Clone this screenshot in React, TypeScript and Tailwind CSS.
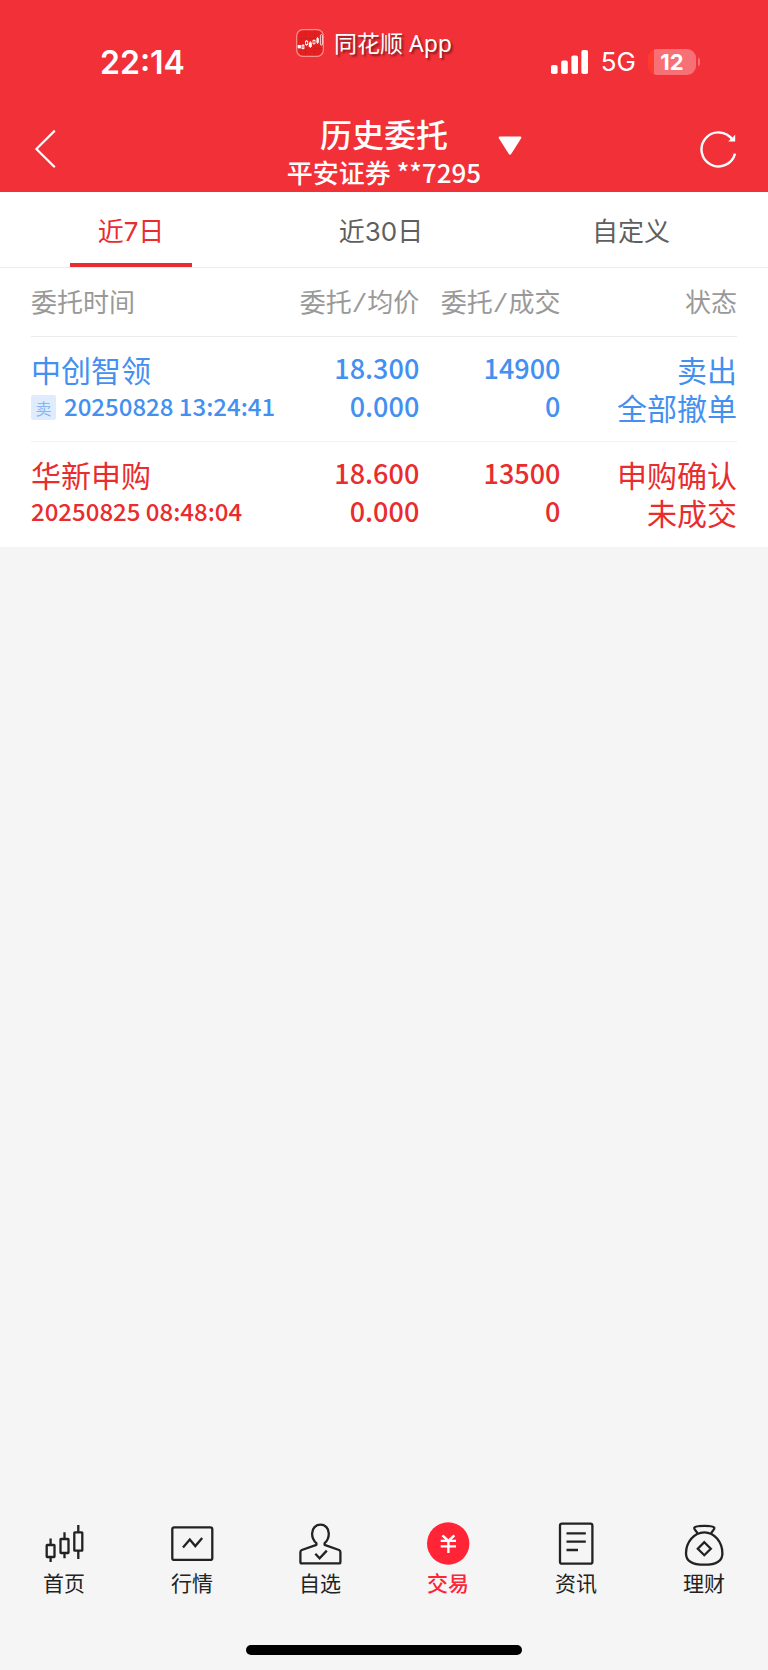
import type { ReactNode } from "react";

type Order = {
  name: string;
  time: string;
  sell?: boolean;
  price: string;
  avgPrice: string;
  amount: string;
  filled: string;
  action: string;
  state: string;
  tone: string;
};

const orders: Order[] = [
  {
    name: "中创智领",
    time: "20250828 13:24:41",
    sell: true,
    price: "18.300",
    avgPrice: "0.000",
    amount: "14900",
    filled: "0",
    action: "卖出",
    state: "全部撤单",
    tone: "text-[#4390f0]",
  },
  {
    name: "华新申购",
    time: "20250825 08:48:04",
    price: "18.600",
    avgPrice: "0.000",
    amount: "13500",
    filled: "0",
    action: "申购确认",
    state: "未成交",
    tone: "text-[#e92c2e]",
  },
];

function Icon({ children }: { children: ReactNode }) {
  return (
    <svg
      viewBox="0 0 48 48"
      className="size-12"
      fill="none"
      stroke="currentColor"
      strokeWidth="2.3"
      strokeLinejoin="round"
      aria-hidden="true"
    >
      {children}
    </svg>
  );
}

const navItems: { label: string; active?: boolean; icon: ReactNode }[] = [
  {
    label: "首页",
    icon: (
      <Icon>
        <rect x="6.7" y="25" width="7.8" height="12" rx="0.5" />
        <path d="M10.6 18.5V25M10.6 37v5" />
        <rect x="20.5" y="19" width="8" height="14" rx="0.5" />
        <path d="M24.5 12.3V19M24.5 33v5.3" />
        <rect x="34.3" y="12.3" width="8" height="18.4" rx="0.5" />
        <path d="M38.3 5v7M38.3 31v8" />
      </Icon>
    ),
  },
  {
    label: "行情",
    icon: (
      <Icon>
        <rect x="4.3" y="7.3" width="40" height="32.6" rx="2" />
        <path d="M15 27.5l6.8-8 5.5 6.6L34.2 18" strokeLinejoin="miter" />
      </Icon>
    ),
  },
  {
    label: "自选",
    icon: (
      <Icon>
        <path d="M4.4 32.2V42q0 1.4 1.4 1.4H43q1.4 0 1.4-1.4V32.2q0-1.6-1.4-2.2L28.6 24.8V23.2C31.2 21 32.8 17.6 32.8 13.5C32.8 8.2 29.2 4.7 24.5 4.7S16.1 8.2 16.1 13.5C16.1 17.6 17.8 21 20.4 23.2V24.8L5.8 30Q4.4 30.6 4.4 32.2Z" />
        <path d="M19.3 33.8l4.3 4.6 7.2-7.8" strokeLinejoin="miter" />
      </Icon>
    ),
  },
  {
    label: "交易",
    active: true,
    icon: (
      <Icon>
        <circle cx="24.2" cy="23.5" r="21.2" fill="#ff2436" stroke="none" />
        <path
          d="M18.4 15.4l6 5.6 6-5.6M16.7 20.9H32M16.7 26.4H32M24.4 21v12"
          stroke="#fff"
          strokeWidth="2.4"
          strokeLinejoin="miter"
        />
      </Icon>
    ),
  },
  {
    label: "资讯",
    icon: (
      <Icon>
        <rect x="8" y="3.7" width="32.4" height="40" rx="2" />
        <path d="M14.5 13.4h19.3M14.5 21.7h19.3M14.5 30H26" />
      </Icon>
    ),
  },
  {
    label: "理财",
    icon: (
      <Icon>
        <path d="M17.6 13.8C17 11.5 13.8 9.5 14.2 7.8C15.2 5.2 33.4 5.2 34.4 7.8C34.8 9.5 31.6 11.5 31 13.8" />
        <path d="M24.3 12.4C13.8 12.4 6 22.6 6 33.4C6 41.6 12.6 44.7 24.3 44.7S42.4 41.6 42.4 33.4C42.4 22.6 34.8 12.4 24.3 12.4Z" />
        <path d="M24.3 22.2l6.5 6.5-6.5 6.5-6.5-6.5z" strokeLinejoin="miter" />
      </Icon>
    ),
  },
];

function StatusBar() {
  return (
    <div className="grid h-24 grid-cols-3 items-start">
      <div className="pt-10 pl-[100px] font-['Inter',sans-serif] text-[32px] leading-[46px] font-semibold">
        22:14
      </div>
      <div className="flex items-center justify-center gap-2.5 pt-[23px] pr-5">
        <svg viewBox="0 0 28 28" className="size-7 shrink-0" aria-hidden="true">
          <rect x="0.7" y="0.7" width="26.6" height="26.6" rx="6" fill="#e3201f" stroke="#fb8f90" strokeWidth="1.2" />
          <path d="M1.5 9.5h25M1.5 19.5h25M9.5 1.5v25M18.5 1.5v25" stroke="#cf1a1c" strokeWidth="0.5" />
          <g fill="#fff">
            <rect x="1.7" y="16" width="3.2" height="3.4" />
            <rect x="12.8" y="13.4" width="3" height="4.4" />
            <rect x="20.4" y="9.2" width="2.4" height="4.6" />
          </g>
          <g fill="none" stroke="#fff" strokeWidth="0.8">
            <rect x="6" y="16.4" width="2" height="3.2" />
            <path d="M7 15v5.4M14.3 12v7M21.6 8v7M18 10.4v5.4M10.6 11v6" />
            <rect x="9.5" y="12.2" width="2.2" height="3.4" fill="#e3201f" />
            <rect x="17" y="11.4" width="2" height="3" fill="#e3201f" />
            <rect x="24.4" y="5.6" width="2" height="10.6" rx="1" />
          </g>
        </svg>
        <span className="font-['Noto_Sans','Noto_Sans_CJK_SC',sans-serif] text-[23px] leading-10 whitespace-nowrap [text-shadow:2px_2px_2px_rgb(0_0_0/0.45)]">
          同花顺 App
        </span>
      </div>
      <div className="mt-11 mr-[68px] flex h-9 items-center justify-end gap-3">
        <svg viewBox="0 0 38 24" className="h-6 w-[38px] shrink-0" fill="#fff" aria-hidden="true">
          <rect x="0" y="15" width="6.6" height="9" rx="1.8" />
          <rect x="10.2" y="10.6" width="6.6" height="13.4" rx="1.8" />
          <rect x="20.4" y="5.4" width="6.6" height="18.6" rx="1.8" />
          <rect x="30.4" y="0" width="6.6" height="24" rx="1.8" />
        </svg>
        <span className="font-['Inter',sans-serif] text-[26px] leading-[38px]">5G</span>
        <span className="flex items-center gap-0.5">
          <span className="flex h-[26px] w-12 items-center justify-center overflow-hidden rounded-[9px] bg-[linear-gradient(to_right,#ff3b30_6px,#f77076_6px)] font-['Inter',sans-serif] text-[22px] font-bold">
            12
          </span>
          <span className="h-2 w-0.5 rounded-r-full bg-[#f77076]" />
        </span>
      </div>
    </div>
  );
}

function TitleBar() {
  return (
    <div className="grid h-24 grid-cols-[1fr_auto_1fr] items-center">
      <button type="button" aria-label="返回" className="mt-2.5 ml-8 justify-self-start">
        <svg viewBox="0 0 28 40" className="h-10 w-7" fill="none" stroke="#fff" strokeWidth="2.2" aria-hidden="true">
          <path d="M22.8 1.6L4.4 20l18.4 18.2" />
        </svg>
      </button>
      <button type="button" className="relative flex h-24 flex-col items-center pt-5">
        <span className="text-[32px] leading-10 font-medium">历史委托</span>
        <span className="font-['Noto_Sans_CJK_SC',sans-serif] text-[26px] leading-8 font-medium whitespace-nowrap">
          平安证券 **7295
        </span>
        <svg viewBox="0 0 24 20" className="absolute top-10 -right-[41px] h-5 w-6" fill="#fff" aria-hidden="true">
          <path d="M1.8 0.6H22.2Q24 0.8 23 2.6L13.2 18Q12 19.6 10.8 18L1 2.6Q0 0.8 1.8 0.6Z" />
        </svg>
      </button>
      <button type="button" aria-label="刷新" className="mt-2.5 mr-7 justify-self-end">
        <svg viewBox="0 0 40 40" className="size-10" fill="none" stroke="#fff" strokeWidth="2.4" aria-hidden="true">
          <path d="M35 24.6A17 17 0 1 1 32.4 10.6" />
          <path d="M35.2 5.8V12.6H28.2Z" fill="#fff" stroke="none" />
        </svg>
      </button>
    </div>
  );
}

function Tabs() {
  const tabs = ["近7日", "近30日", "自定义"];
  return (
    <div
      className="grid grid-cols-3 border-b border-[#ededed] bg-white pr-3 pl-1.5 font-['Inter','Noto_Sans_CJK_SC',sans-serif] text-[26px]"
      role="tablist"
    >
      {tabs.map((tab, i) => (
        <button
          key={tab}
          type="button"
          role="tab"
          aria-selected={i === 0}
          className={
            i === 0
              ? "flex h-[75px] flex-col items-center text-[#e92c2e]"
              : "flex h-[75px] flex-col items-center text-[#5f5f5f]"
          }
        >
          <span className="pt-2 leading-[63px]">{tab}</span>
          {i === 0 && <span className="h-1 w-[122px] bg-[#e92c2e]" />}
        </button>
      ))}
    </div>
  );
}

function OrderTable() {
  const num = "block font-['Noto_Sans_CJK_SC',sans-serif] text-[27px] leading-[38px] font-medium";
  return (
    <div className="bg-white px-[31px] pb-px">
      <table className="w-full table-fixed border-collapse">
        <thead>
          <tr className="h-[68px] border-b border-[#ebebeb] text-right font-['Liberation_Mono','Noto_Sans_CJK_SC',monospace] text-[26px] text-[#999]">
            <th className="w-[35%] pt-2 text-left font-normal">委托时间</th>
            <th className="w-[20%] pt-2 font-normal whitespace-nowrap">委托/均价</th>
            <th className="w-[20%] pt-2 font-normal whitespace-nowrap">委托/成交</th>
            <th className="w-[25%] pt-2 font-normal">状态</th>
          </tr>
        </thead>
        <tbody>
          {orders.map((o) => (
            <tr key={o.time} className={`h-[105px] border-b border-[#f2f2f2] text-right last:border-0 ${o.tone}`}>
              <td className="pt-1 text-left">
                <span className="block text-[30px] leading-[38px]">{o.name}</span>
                <span className="flex h-[38px] items-center gap-2 pb-2 font-['Noto_Sans_CJK_SC',sans-serif] text-[24px] leading-[30px] font-medium whitespace-nowrap">
                  {o.sell && (
                    <span className="mt-1 flex size-[25px] shrink-0 items-center justify-center rounded-xs bg-[#dfecfd] text-[16px] font-normal text-[#84b5f5]">
                      卖
                    </span>
                  )}
                  {o.time}
                </span>
              </td>
              <td className="pb-1">
                <span className={num}>{o.price}</span>
                <span className={num}>{o.avgPrice}</span>
              </td>
              <td className="pb-1">
                <span className={num}>{o.amount}</span>
                <span className={num}>{o.filled}</span>
              </td>
              <td className="pt-1 text-[30px] leading-[38px]">
                <span className="block">{o.action}</span>
                <span className="block">{o.state}</span>
              </td>
            </tr>
          ))}
        </tbody>
      </table>
    </div>
  );
}

export default function App() {
  return (
    <div className="flex min-h-screen flex-col bg-[#f5f5f5] font-['Roboto','Noto_Sans_CJK_SC',sans-serif]">
      <header className="bg-[#f23038] text-white">
        <StatusBar />
        <TitleBar />
      </header>
      <main className="flex-1">
        <Tabs />
        <OrderTable />
      </main>
      <nav className="grid grid-cols-6">
        {navItems.map((item) => (
          <a
            key={item.label}
            href="#"
            className={
              item.active
                ? "flex flex-col items-center text-[#ff2436]"
                : "flex flex-col items-center text-[#222]"
            }
          >
            {item.icon}
            <span className={item.active ? "text-[21px] leading-8 font-medium" : "text-[21px] leading-8"}>
              {item.label}
            </span>
          </a>
        ))}
      </nav>
      <div className="flex justify-center pt-[45px] pb-[15px]">
        <div className="h-2.5 w-[276px] rounded-full bg-black" />
      </div>
    </div>
  );
}
